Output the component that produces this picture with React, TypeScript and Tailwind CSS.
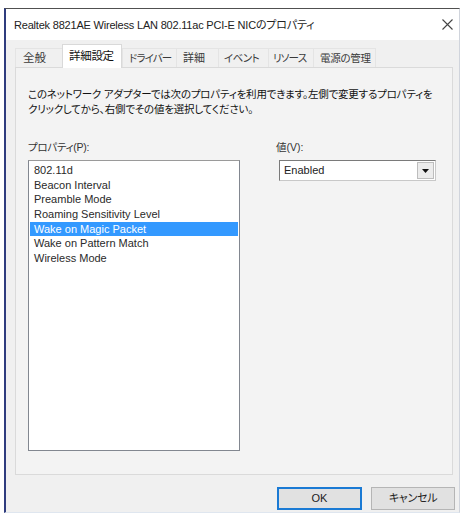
import React from "react";

const F = "[font-family:'Liberation_Sans','Noto_Sans_CJK_JP',sans-serif] [font-feature-settings:'palt']";

const tabs = [
  { label: "全般", w: "w-[47px]", pl: "pl-[7px]", f: "text-[11.5px]" },
  { label: "詳細設定", w: "w-[60px]", pl: "pl-[6px]", f: "text-[11.5px] tracking-[-0.3px]", sel: true },
  { label: "ドライバー", w: "w-[54px]", pl: "pl-[6px]", f: "text-[10.5px] tracking-[-0.9px]" },
  { label: "詳細", w: "w-[42px]", pl: "pl-[6px]", f: "text-[11px]" },
  { label: "イベント", w: "w-[50px]", pl: "pl-[5px]", f: "text-[10.5px] tracking-[-0.6px]" },
  { label: "リソース", w: "w-[45px]", pl: "pl-[4px]", f: "text-[10.5px] tracking-[-0.8px]" },
  { label: "電源の管理", w: "w-[62px]", pl: "pl-[6px]", f: "text-[10.5px] tracking-[-0.3px]" },
];

const items = [
  "802.11d",
  "Beacon Interval",
  "Preamble Mode",
  "Roaming Sensitivity Level",
  "Wake on Magic Packet",
  "Wake on Pattern Match",
  "Wireless Mode",
];

export default function App() {
  return (
    <div className={`w-[462px] h-[518px] bg-white pt-[8px] pl-[4px] pr-[2px] pb-[5px] ${F}`}>
      <div className="w-[456px] h-[505px] flex flex-col border-t border-t-[#505050] border-l-2 border-l-[#2f3c7e] border-r border-r-[#d0d4dc] border-b border-b-[#dfe6ef] bg-[#f0f0f0]">
        {/* title bar */}
        <div className="h-[31px] bg-white flex items-center justify-between pl-[8px] pr-[6px] pt-[2px] shrink-0">
          <span className="text-[11px] text-[#222] leading-none tracking-[-0.2px]">
            Realtek 8821AE Wireless LAN 802.11ac PCI-E NICのプロパティ
          </span>
          <svg width="11" height="11" viewBox="0 0 11 11" className="mb-[2px]">
            <path d="M0.5 0.5 L10.5 10.5 M10.5 0.5 L0.5 10.5" stroke="#444" strokeWidth="1.1" fill="none" />
          </svg>
        </div>

        {/* tabs */}
        <div className="h-[27px] flex items-end pl-[9px] shrink-0">
          {tabs.map((t) => (
            <div
              key={t.label}
              className={
                t.sel
                  ? `${t.w} ${t.pl} ${t.f} h-[24px] bg-white border border-b-0 border-[#d9d9d9] flex items-center text-[#111] -mb-px relative z-10`
                  : `${t.w} ${t.pl} ${t.f} h-[19px] border-l border-t border-[#e4e4e4] flex items-center pt-[1px] text-[#3a3a3a]`
              }
            >
              <span className="leading-none whitespace-nowrap">{t.label}</span>
            </div>
          ))}
          <div className="w-px h-[19px] bg-[#e4e4e4]" />
        </div>

        {/* panel */}
        <div className="ml-[9px] mr-[6px] h-[408px] border border-[#dadada] bg-[#f3f3f3] flex flex-col pl-[12px] pr-[8px] pt-[19px] shrink-0">
          <div className="text-[10.5px] leading-[15px] text-[#111] tracking-[-0.2px]">
            <div className="whitespace-nowrap">このネットワーク アダプターでは次のプロパティを利用できます。左側で変更するプロパティを</div>
            <div className="whitespace-nowrap">クリックしてから、右側でその値を選択してください。</div>
          </div>
          <div className="flex mt-[23px] gap-[36px]">
            <div className="w-[212px] flex flex-col">
              <div className="text-[10.5px] leading-[14px] text-[#333] mb-[6px] tracking-[-0.3px]">プロパティ(P):</div>
              <div className="h-[291px] bg-white border border-[#828790] border-t-[#9a9a9a] pt-[2px] pl-px pr-px">
                {items.map((it, i) => (
                  <div
                    key={it}
                    className={
                      i === 4
                        ? "h-[14.7px] bg-[#3399ff] text-white text-[11px] leading-[14.7px] pl-[4px] whitespace-nowrap"
                        : "h-[14.7px] text-[#2a2a2a] text-[11px] leading-[14.7px] pl-[4px] whitespace-nowrap"
                    }
                  >
                    {it}
                  </div>
                ))}
              </div>
            </div>
            <div className="flex flex-col">
              <div className="text-[10.5px] leading-[14px] text-[#333] mb-[6px]">値(V):</div>
              <div className="ml-[3px] w-[157px] h-[21px] bg-white border border-[#7a7a7a] border-r-[#c8c8c8] border-b-[#c8c8c8] flex items-center">
                <span className="flex-1 pl-[4px] text-[11px] text-[#222] leading-none">Enabled</span>
                <div className="w-[17px] h-[17px] mr-px bg-[#ececec] border border-[#bdbdbd] flex items-center justify-center">
                  <svg width="7" height="4" viewBox="0 0 7 4">
                    <path d="M0 0 L7 0 L3.5 4 Z" fill="#111" />
                  </svg>
                </div>
              </div>
            </div>
          </div>
        </div>

        {/* buttons */}
        <div className="flex justify-end gap-[9px] mt-[12px] pr-[4px]">
          <button className="w-[85px] h-[23px] bg-[#e1e1e1] border-2 border-[#1a7ad4] text-[11px] text-[#222] leading-none flex items-center justify-center">
            OK
          </button>
          <button className="w-[84px] h-[23px] bg-[#e1e1e1] border border-[#b5b5b5] text-[11px] text-[#222] leading-none flex items-center justify-center tracking-[-0.3px]">
            キャンセル
          </button>
        </div>
      </div>
    </div>
  );
}
